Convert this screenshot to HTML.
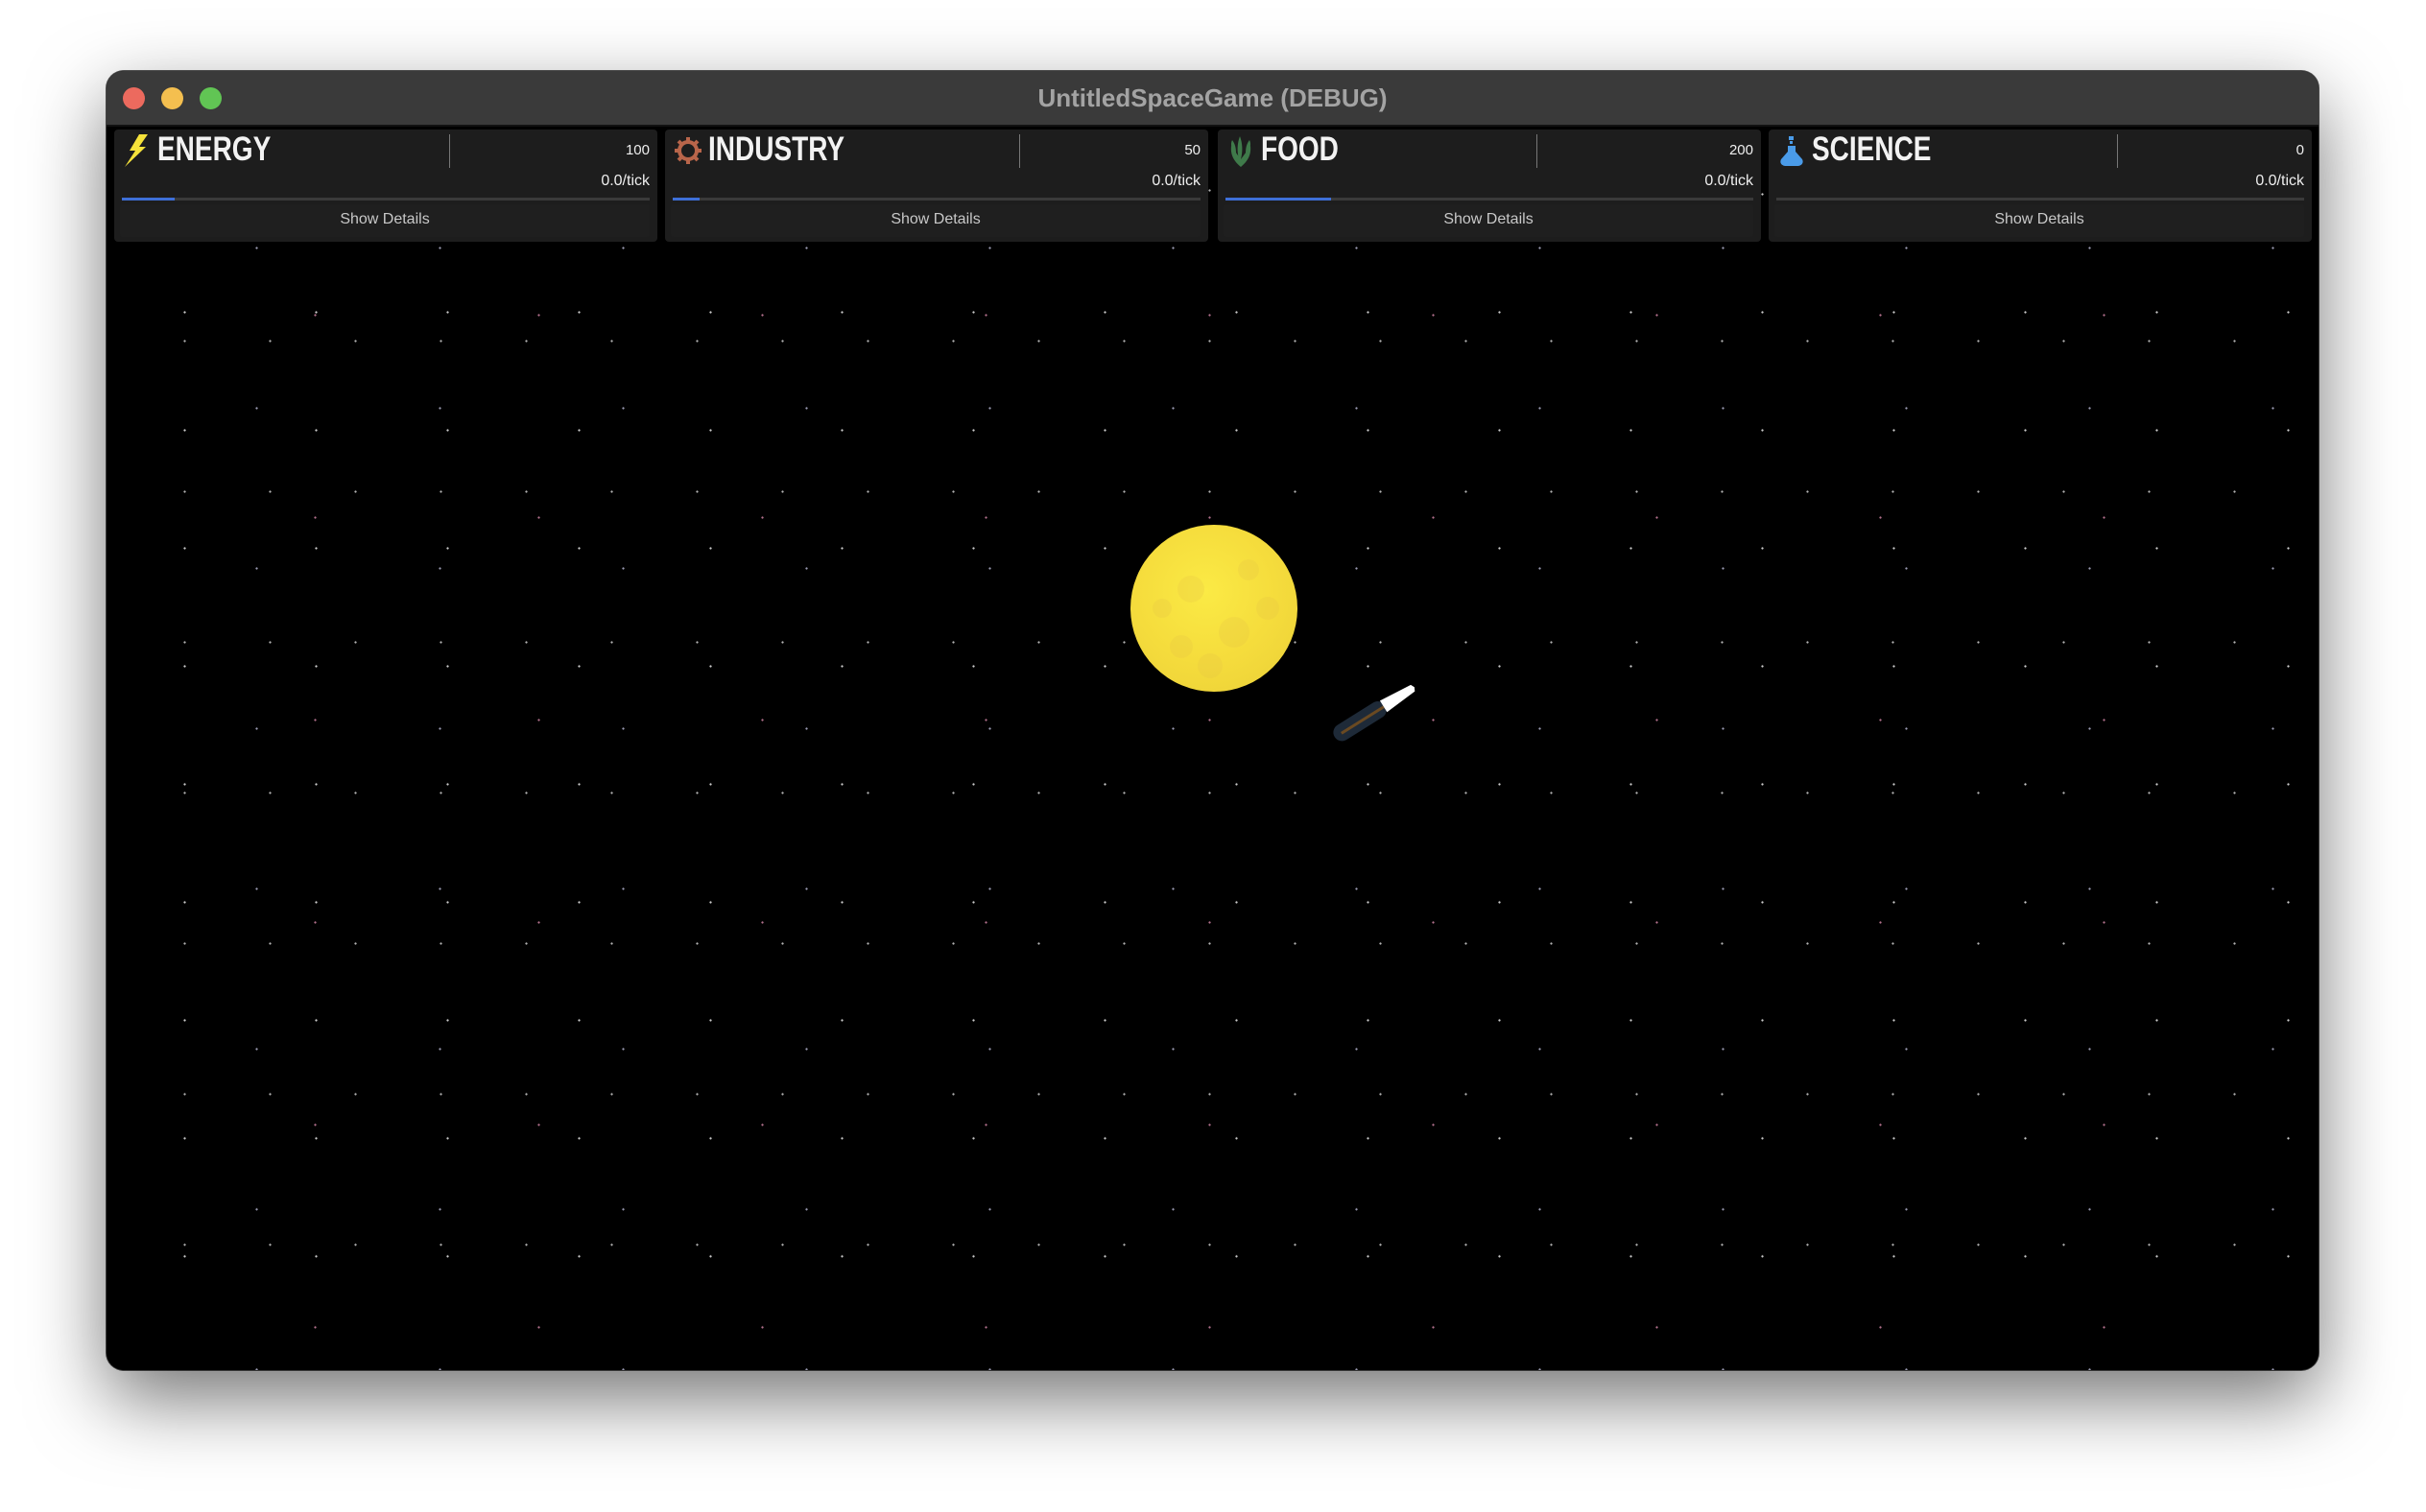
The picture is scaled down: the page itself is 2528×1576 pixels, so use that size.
<!DOCTYPE html>
<html><head><meta charset="utf-8"><style>
*{margin:0;padding:0;box-sizing:border-box}
html,body{width:2528px;height:1576px;background:#fff;overflow:hidden;font-family:"Liberation Sans",sans-serif}
.win{position:absolute;left:111px;top:74px;width:2305px;height:1354px;border-radius:18px;background:#000;overflow:hidden;box-shadow:0 30px 80px rgba(0,0,0,.55),0 0 0 1px #555;}
.tb{position:absolute;left:0;top:0;width:100%;height:58px;background:#3a3a3a;border-bottom:2px solid #111}
.tl{position:absolute;top:17px;width:23px;height:23px;border-radius:50%}
.title{position:absolute;left:0;right:0;top:13px;text-align:center;color:#a3a3a3;font-weight:bold;font-size:26px}
.space{position:absolute;left:0;top:60px;width:100%;height:1294px;background-color:#000;
background-image:
radial-gradient(circle,rgba(255,255,255,.8) 0.8px,transparent 1.4px),
radial-gradient(circle,rgba(220,220,255,.7) 0.8px,transparent 1.4px),
radial-gradient(circle,rgba(255,160,200,.7) 0.8px,transparent 1.4px),
radial-gradient(circle,rgba(255,255,255,.7) 0.8px,transparent 1.4px);
background-size:137px 123px,191px 167px,233px 211px,89px 157px;
background-position:13px 7px,61px 41px,101px 89px,37px 143px}
.p{position:absolute;top:61px;width:566px;height:117px;background:#1d1d1d;border-radius:4px}
.hd{position:absolute;left:45px;top:1px;font-weight:bold;font-size:35px;color:#f2f2f2;transform:scaleX(.8);transform-origin:0 0}
.ic{position:absolute;left:9px;top:5px;width:30px;height:34px}
.dv{position:absolute;top:5px;width:1px;height:35px;background:#777}
.n{position:absolute;right:8px;top:13px;font-size:15px;color:#eee}
.r{position:absolute;right:8px;top:45px;font-size:16px;color:#eee}
.bar{position:absolute;left:8px;right:8px;top:71px;height:3px;background:#3a3a3a}
.bar i{position:absolute;left:0;top:0;height:3px;background:#3e6fd8}
.btn{position:absolute;left:6px;right:8px;top:78px;height:34px;background:#1f1f1f;border-radius:3px;text-align:center;line-height:32px;font-size:16px;color:#c8c8c8}
</style></head><body>
<div class="win">
<div class="space"></div>
<div class="tb">
<div class="tl" style="left:17px;background:#ec6a5e"></div>
<div class="tl" style="left:57px;background:#f4bf4f"></div>
<div class="tl" style="left:97px;background:#61c554"></div>
<div class="title">UntitledSpaceGame (DEBUG)</div>
</div>

<div class="p" style="left:8px">
<svg class="ic" viewBox="0 0 30 34"><path d="M17 0 L7 17 L13 17 L2 34 L24 13 L17 13 L26 0 Z" fill="#f5e23a"/></svg>
<div class="hd">ENERGY</div><div class="dv" style="left:349px"></div>
<div class="n">100</div><div class="r">0.0/tick</div>
<div class="bar"><i style="width:55px"></i></div><div class="btn">Show Details</div></div>

<div class="p" style="left:582px">
<svg class="ic" viewBox="0 0 30 34"><g transform="translate(15,17)" fill="none" stroke="#b8654a" stroke-width="4"><circle r="9"/><path d="M0 -14V-10M0 10V14M-14 0H-10M10 0H14M-10 -10L-7 -7M7 7L10 10M-10 10L-7 7M7 -7L10 -10"/></g></svg>
<div class="hd">INDUSTRY</div><div class="dv" style="left:369px"></div>
<div class="n">50</div><div class="r">0.0/tick</div>
<div class="bar"><i style="width:28px"></i></div><div class="btn">Show Details</div></div>

<div class="p" style="left:1158px">
<svg class="ic" viewBox="0 0 30 34"><g fill="#3f7a4a"><path d="M15 34 C8 28 4 22 5 12 C9 18 12 22 15 26 C18 22 21 18 25 12 C26 22 22 28 15 34Z"/><path d="M13 26 C11 18 11 10 14 2 C17 10 17 18 15 26Z"/><path d="M8 20 C5 14 4 10 6 6 C9 10 10 14 10 20Z"/><path d="M22 20 C25 14 26 10 24 6 C21 10 20 14 20 20Z"/></g></svg>
<div class="hd">FOOD</div><div class="dv" style="left:332px"></div>
<div class="n">200</div><div class="r">0.0/tick</div>
<div class="bar"><i style="width:110px"></i></div><div class="btn">Show Details</div></div>

<div class="p" style="left:1732px">
<svg class="ic" viewBox="0 0 30 34"><g fill="#4a9be8"><path d="M11 12 L11 18 L4 26 C2 30 5 33 9 33 L21 33 C25 33 28 30 26 26 L19 18 L19 12Z"/><rect x="12" y="2" width="5" height="4"/><rect x="13" y="7" width="3" height="3"/></g></svg>
<div class="hd">SCIENCE</div><div class="dv" style="left:363px"></div>
<div class="n">0</div><div class="r">0.0/tick</div>
<div class="bar"></div><div class="btn">Show Details</div></div>

<svg style="position:absolute;left:0;top:0" width="2305" height="1354">
<defs><radialGradient id="sg" cx="45%" cy="40%" r="60%"><stop offset="0" stop-color="#fbea45"/><stop offset=".7" stop-color="#f5dc3c"/><stop offset="1" stop-color="#f0d63a"/></radialGradient></defs>
<circle cx="1154" cy="560" r="87" fill="url(#sg)"/>
<g fill="#e6c444" opacity=".25"><circle cx="1130" cy="540" r="14"/><circle cx="1175" cy="585" r="16"/><circle cx="1120" cy="600" r="12"/><circle cx="1190" cy="520" r="11"/><circle cx="1150" cy="620" r="13"/><circle cx="1100" cy="560" r="10"/><circle cx="1210" cy="560" r="12"/></g>
<g transform="translate(1312,674) rotate(-32)">
<rect x="-38" y="-9" width="62" height="18" rx="9" fill="#1e2a38"/>
<rect x="-30" y="-1" width="52" height="3" fill="#6a4a22"/>
<path d="M22 -7 L58 -4 L60 0 L58 4 L22 7Z" fill="#fff"/>
</g>
</svg>
</div>
</body></html>
